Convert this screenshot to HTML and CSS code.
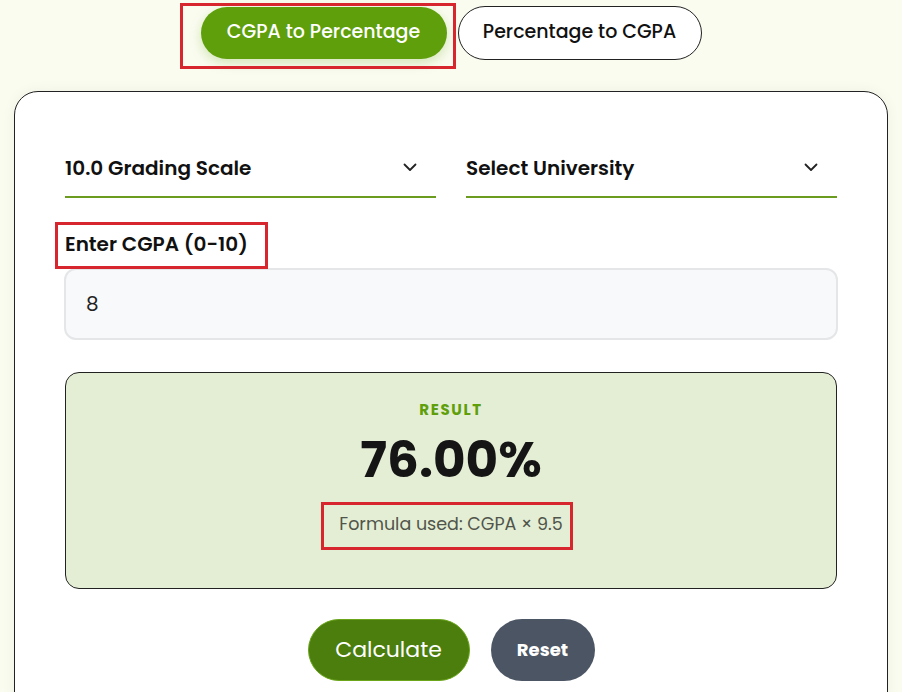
FILE: index.html
```html
<!DOCTYPE html>
<html lang="en">
<head>
    <meta charset="UTF-8">
    <meta name="viewport" content="width=device-width, initial-scale=1.0">
    <title>CGPA to Percentage Converter</title>
    <link rel="stylesheet" href="styles.css">
</head>
<body>
    <!-- Mode switch -->
    <div class="tabs">
        <button class="tab active marked">CGPA to Percentage</button>
        <button class="tab">Percentage to CGPA</button>
    </div>

    <!-- Converter card -->
    <div class="card">
        <div class="selects">
            <div class="select-wrap">
                <select id="scale">
                    <option>10.0 Grading Scale</option>
                    <option>4.0 Grading Scale</option>
                </select>
                <svg class="chevron" width="14" height="9" viewBox="0 0 14 9"><path d="M1.5 1.5 L7 7 L12.5 1.5" fill="none" stroke="#222" stroke-width="1.8" stroke-linecap="round" stroke-linejoin="round"/></svg>
            </div>
            <div class="select-wrap">
                <select id="university">
                    <option>Select University</option>
                </select>
                <svg class="chevron" width="14" height="9" viewBox="0 0 14 9"><path d="M1.5 1.5 L7 7 L12.5 1.5" fill="none" stroke="#222" stroke-width="1.8" stroke-linecap="round" stroke-linejoin="round"/></svg>
            </div>
        </div>

        <label for="cgpa" class="field-label"><span class="marked">Enter CGPA (0-10)</span></label>
        <input id="cgpa" class="field-input" type="text" value="8">

        <!-- Result panel -->
        <div class="result">
            <div class="result-title">RESULT</div>
            <div class="result-value">76.00%</div>
            <div class="result-note"><span class="marked">Formula used: CGPA × 9.5</span></div>
        </div>

        <div class="actions">
            <button class="btn btn-calc">Calculate</button>
            <button class="btn btn-reset">Reset</button>
        </div>
    </div>
</body>
</html>
```

FILE: styles.css
```css
/* Page */
body {
    margin: 0;
    background: #fafcf0;
    font-family: "Poppins", "Inter", "Noto Sans", sans-serif;
    color: #111;
}

button {
    font-family: inherit;
    cursor: pointer;
}

/* Red marker boxes drawn around highlighted items */
.marked {
    position: relative;
}
.marked::after {
    content: "";
    position: absolute;
    border: 3px solid #d7262e;
    pointer-events: none;
}

/* Mode switch */
.tabs {
    display: flex;
    justify-content: center;
    align-items: center;
    gap: 11px;
    padding-top: 6px;
}

.tab {
    height: 54px;
    padding: 0 20px;
    border-radius: 27px;
    border: 1px solid #222;
    background: #fff;
    font-size: 19px;
    font-weight: 500;
    color: #111;
    line-height: 1;
    padding-bottom: 4px;
}

.tab.active {
    height: 52px;
    width: 246px;
    border: none;
    background: #5e9f0b;
    color: #fff;
    box-shadow: 0 4px 12px rgba(94, 159, 11, 0.25);
}

.tab.marked::after {
    top: -4px;
    bottom: -10px;
    left: -21px;
    right: -9px;
}

.tab + .tab {
    width: 244px;
}

/* Card */
.card {
    margin: 31px 14px 0;
    padding: 46px 50px 40px;
    background: #fff;
    border: 1px solid #222;
    border-radius: 24px;
    box-shadow: 0 0 14px rgba(0, 0, 0, 0.05);
}

.selects {
    display: grid;
    grid-template-columns: 1fr 1fr;
    gap: 30px;
}

.select-wrap {
    display: grid;
    align-items: center;
    border-bottom: 2px solid #6b9c20;
}

.select-wrap select,
.select-wrap .chevron {
    grid-area: 1 / 1;
}

.select-wrap select {
    appearance: none;
    -webkit-appearance: none;
    border: none;
    background: transparent;
    height: 58px;
    padding: 0 0 0 0;
    padding-top: 2px;
    font-family: inherit;
    font-size: 20px;
    font-weight: 600;
    color: #111;
    outline: none;
}

.chevron {
    justify-self: end;
    margin-right: 19px;
    margin-top: 1px;
    pointer-events: none;
}

/* CGPA input */
.field-label {
    display: block;
    margin-top: 31px;
    font-size: 20px;
    font-weight: 600;
    line-height: 30px;
}

.field-label .marked::after {
    top: -8px;
    bottom: -11px;
    left: -10px;
    right: -20px;
}

.field-input {
    display: block;
    box-sizing: border-box;
    width: calc(100% + 2px);
    margin: 9px -1px 0;
    height: 72px;
    padding: 0 20px;
    background: #f8f9fa;
    border: 2px solid #e4e6e8;
    border-radius: 12px;
    font-family: inherit;
    font-size: 20px;
    color: #222;
    outline: none;
}

/* Result panel */
.result {
    margin-top: 32px;
    height: 217px;
    box-sizing: border-box;
    padding-top: 26px;
    background: #e4eed5;
    border: 1px solid #222;
    border-radius: 14px;
    text-align: center;
}

.result-title {
    font-size: 15px;
    font-weight: 700;
    letter-spacing: 1.6px;
    line-height: 22px;
    color: #5e9f0b;
}

.result-value {
    margin-top: 4px;
    font-size: 50px;
    font-weight: 700;
    line-height: 70px;
    color: #151515;
}

.result-note {
    margin-top: 16px;
    font-size: 17.5px;
    line-height: 26px;
    color: #50554b;
}

.result-note .marked::after {
    top: -10px;
    bottom: -14px;
    left: -18px;
    right: -10px;
}

/* Buttons */
.actions {
    display: flex;
    justify-content: center;
    gap: 21px;
    margin-top: 30px;
}

.btn {
    height: 62px;
    border-radius: 31px;
    border: none;
    color: #fff;
    padding-bottom: 3px;
}

.btn-calc {
    width: 162px;
    background: #4b7e0c;
    border: 1px solid #6aa51a;
    font-size: 22px;
    font-weight: 400;
}

.btn-reset {
    width: 104px;
    background: #4b5563;
    font-size: 18px;
    font-weight: 700;
}
```
